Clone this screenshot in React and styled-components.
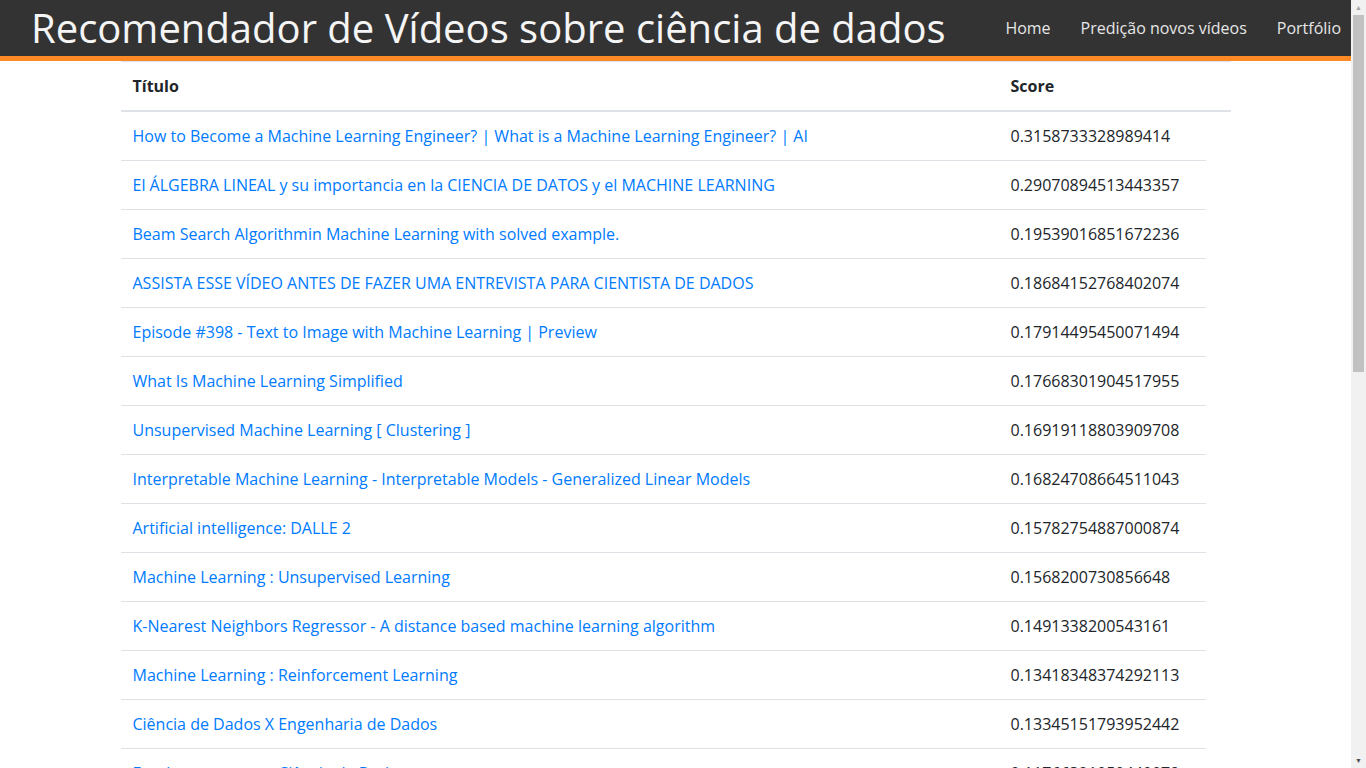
import React from "react";
import styled, { createGlobalStyle } from "styled-components";

const GlobalStyle = createGlobalStyle`
  body {
    margin: 0;
    padding-right: 15px;
    font-family: "Open Sans", "Liberation Sans", sans-serif;
    font-size: 16px;
    line-height: 1.5;
    color: #212529;
    background: #fff;
  }
`;

const TopBar = styled.header`
  display: flex;
  align-items: center;
  justify-content: space-between;
  height: 56px;
  background-color: #333;
  border-bottom: 5px solid #fd8a25;
  padding: 0 10px 0 31px;
`;

const Brand = styled.h1`
  margin: 0;
  font-size: 40px;
  font-weight: 400;
  line-height: 1;
  color: #f5f5f5;
  white-space: nowrap;
`;

const Nav = styled.nav`
  display: flex;
  gap: 30px;
`;

const NavLink = styled.a`
  color: #e6e6e6;
  text-decoration: none;
  font-size: 16px;
`;

const Container = styled.div`
  max-width: 1110px;
  margin: 0 auto;
`;

const HeadRow = styled.div`
  display: grid;
  grid-template-columns: 878px 1fr;
  border-top: 1px solid #dee2e6;
  border-bottom: 2px solid #dee2e6;
`;

const Row = styled.div`
  display: grid;
  grid-template-columns: 878px 1fr;
  width: calc(100% - 25px);
  border-bottom: 1px solid #dee2e6;
`;

const Cell = styled.div`
  padding: 12px;
  font-weight: ${(p) => (p.$head ? 700 : 400)};
  white-space: nowrap;
`;

const VideoLink = styled.a`
  color: #007bff;
  text-decoration: none;
`;

/* classic window scrollbar, drawn over the right edge */
const ScrollTrack = styled.div`
  position: fixed;
  top: 0;
  right: 0;
  bottom: 0;
  width: 15px;
  background: #f1f1f1;
  display: flex;
  flex-direction: column;
  align-items: center;
`;

const Arrow = styled.div`
  height: 15px;
  width: 15px;
  display: flex;
  align-items: center;
  justify-content: center;
  color: ${(p) => (p.$dim ? "#a3a3a3" : "#505050")};
  font-size: 7px;
  line-height: 1;
`;

const Thumb = styled.div`
  width: 11px;
  height: 357px;
  background: #c1c1c1;
`;

const Spacer = styled.div`
  flex: 1;
`;

const videos = [
  ["How to Become a Machine Learning Engineer? | What is a Machine Learning Engineer? | AI", "0.3158733328989414"],
  ["El ÁLGEBRA LINEAL y su importancia en la CIENCIA DE DATOS y el MACHINE LEARNING", "0.29070894513443357"],
  ["Beam Search Algorithmin Machine Learning with solved example.", "0.19539016851672236"],
  ["ASSISTA ESSE VÍDEO ANTES DE FAZER UMA ENTREVISTA PARA CIENTISTA DE DADOS", "0.18684152768402074"],
  ["Episode #398 - Text to Image with Machine Learning | Preview", "0.17914495450071494"],
  ["What Is Machine Learning Simplified", "0.17668301904517955"],
  ["Unsupervised Machine Learning [ Clustering ]", "0.16919118803909708"],
  ["Interpretable Machine Learning - Interpretable Models - Generalized Linear Models", "0.16824708664511043"],
  ["Artificial intelligence: DALLE 2", "0.15782754887000874"],
  ["Machine Learning : Unsupervised Learning", "0.1568200730856648"],
  ["K-Nearest Neighbors Regressor - A distance based machine learning algorithm", "0.1491338200543161"],
  ["Machine Learning : Reinforcement Learning", "0.13418348374292113"],
  ["Ciência de Dados X Engenharia de Dados", "0.13345151793952442"],
  ["Fundamentos para Ciência de Dados", "0.11766321050440079"],
  ["Machine Learning na prática", "0.11204587630912245"],
  ["Introdução ao Deep Learning", "0.10873120415530981"],
];

export default function App() {
  return (
    <>
      <GlobalStyle />
      <TopBar>
        <Brand>Recomendador de Vídeos sobre ciência de dados</Brand>
        <Nav>
          <NavLink href="#">Home</NavLink>
          <NavLink href="#">Predição novos vídeos</NavLink>
          <NavLink href="#">Portfólio</NavLink>
        </Nav>
      </TopBar>
      <Container>
        <HeadRow>
          <Cell $head>Título</Cell>
          <Cell $head>Score</Cell>
        </HeadRow>
        {videos.map(([title, score]) => (
          <Row key={title}>
            <Cell>
              <VideoLink href="#">{title}</VideoLink>
            </Cell>
            <Cell>{score}</Cell>
          </Row>
        ))}
      </Container>
      <ScrollTrack>
        <Arrow $dim>▲</Arrow>
        <Thumb />
        <Spacer />
        <Arrow>▼</Arrow>
      </ScrollTrack>
    </>
  );
}
